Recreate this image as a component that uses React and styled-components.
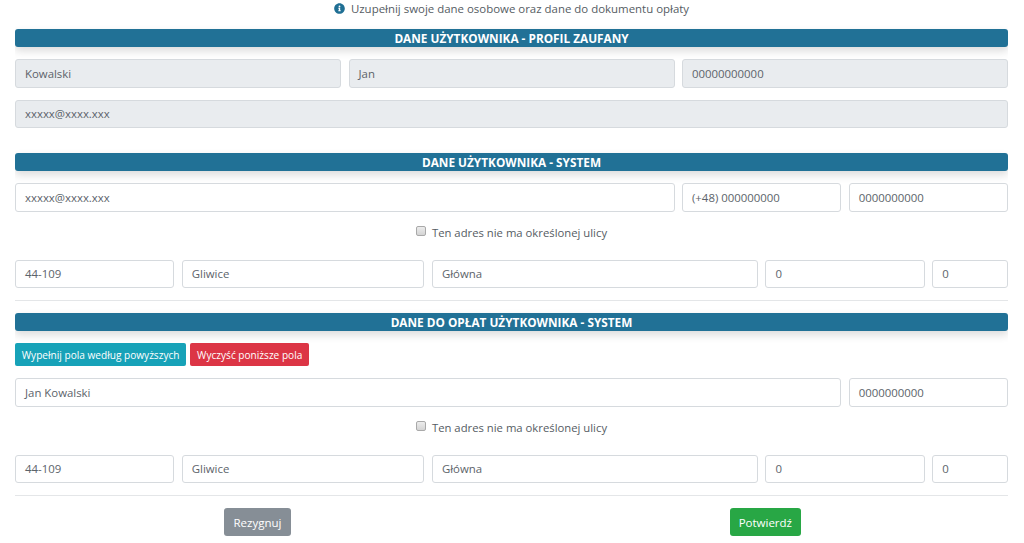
import React from "react";
import styled, { createGlobalStyle } from "styled-components";

const Global = createGlobalStyle`
  html, body { margin: 0; padding: 0; background: #fff; }
  body { font-family: "Open Sans", "Noto Sans", sans-serif; color: #495057; }
`;
const Page = styled.div`
  width: 993px; height: 543px; margin-left: 15px; overflow: hidden;
  display: flex; flex-direction: column;
`;
const Intro = styled.div`
  height: 17px; display: flex; justify-content: center; align-items: center; gap: 6px;
  font-size: 11.45px; color: #555c63; margin-bottom: 12px;
  svg { width: 11px; height: 11px; fill: #1f6f94; }
`;
const Header = styled.div`
  height: 18px; line-height: 19px; text-align: center; background: #217196; color: #fff;
  font-size: 11.8px; font-weight: 700; border-radius: 3px;
  box-shadow: 0 4px 8px rgba(0,0,0,.14); margin-bottom: 12px;
`;
const Row = styled.div`
  display: grid; grid-template-columns: repeat(12, 1fr); column-gap: 7.5px;
  margin-bottom: ${p => p.$mb ?? 12}px;
`;
const Field = styled.div`
  grid-column: span ${p => p.$span};
  box-sizing: border-box; height: 28.5px; padding: 0 9px;
  display: flex; align-items: center; font-size: 11.4px; color: #5c636a;
  background: ${p => p.$off ? "#e9ecef" : "#fff"};
  border: 1px solid #d6dade; border-radius: 3px;
`;
const Check = styled.div`
  box-sizing: border-box; height: 20px; padding-top: 1px;
  display: flex; justify-content: center; align-items: center; gap: 6px;
  font-size: 11.3px; color: #555c63; margin-bottom: 18px;
`;
const Box = styled.span`
  width: 10px; height: 10px; box-sizing: border-box; border: 1px solid #a9a9a9; border-radius: 2px;
  background: linear-gradient(#ececec, #d4d4d4); margin-top: -3px;
`;
const Rule = styled.div`height: 1px; background: #e4e6e8; margin-bottom: 12px;`;
const Tools = styled.div`display: flex; gap: 4px; margin-bottom: 12px;`;
const Small = styled.div`
  height: 23px; padding: 0 6.8px; display: flex; align-items: center; border-radius: 2px;
  font-size: 10.1px; color: #fff; background: ${p => p.$bg};
`;
const Actions = styled.div`display: grid; grid-template-columns: repeat(2, 1fr);`;
const Cell = styled.div`display: flex; justify-content: ${p => p.$j}; padding: ${p => p.$p};`;
const Action = styled.div`
  height: 28px; padding: 0 ${p => p.$px}px; display: flex; align-items: center; border-radius: 3px;
  font-size: 11.5px; color: #fff; background: ${p => p.$bg};
`;

const Info = () => (
  <svg viewBox="0 0 512 512"><path d="M256 8C119 8 8 119 8 256s111 248 248 248 248-111 248-248S393 8 256 8zm0 110a42 42 0 1 1 0 84 42 42 0 0 1 0-84zm56 254c0 7-5 12-12 12h-88c-7 0-12-5-12-12v-24c0-7 5-12 12-12h12v-64h-12c-7 0-12-5-12-12v-24c0-7 5-12 12-12h64c7 0 12 5 12 12v100h12c7 0 12 5 12 12z"/></svg>
);

const Address = () => (
  <Row>
    <Field $span={2}>44-109</Field>
    <Field $span={3}>Gliwice</Field>
    <Field $span={4}>Główna</Field>
    <Field $span={2}>0</Field>
    <Field $span={1}>0</Field>
  </Row>
);

export default function App() {
  return (
    <Page>
      <Global />
      <Intro><Info />Uzupełnij swoje dane osobowe oraz dane do dokumentu opłaty</Intro>
      <Header>DANE UŻYTKOWNIKA - PROFIL ZAUFANY</Header>
      <Row>
        <Field $off $span={4}>Kowalski</Field>
        <Field $off $span={4}>Jan</Field>
        <Field $off $span={4}>00000000000</Field>
      </Row>
      <Row $mb={25}><Field $off $span={12}>xxxxx@xxxx.xxx</Field></Row>
      <Header>DANE UŻYTKOWNIKA - SYSTEM</Header>
      <Row $mb={10}>
        <Field $span={8}>xxxxx@xxxx.xxx</Field>
        <Field $span={2}>(+48) 000000000</Field>
        <Field $span={2}>0000000000</Field>
      </Row>
      <Check><Box />Ten adres nie ma określonej ulicy</Check>
      <Address />
      <Rule />
      <Header>DANE DO OPŁAT UŻYTKOWNIKA - SYSTEM</Header>
      <Tools>
        <Small $bg="#17a2b8">Wypełnij pola według powyższych</Small>
        <Small $bg="#dc3545">Wyczyść poniższe pola</Small>
      </Tools>
      <Row $mb={10}>
        <Field $span={10}>Jan Kowalski</Field>
        <Field $span={2}>0000000000</Field>
      </Row>
      <Check><Box />Ten adres nie ma określonej ulicy</Check>
      <Address />
      <Rule />
      <Actions>
        <Cell $j="flex-start" $p="0 0 0 209px"><Action $px={9.5} $bg="#868e96">Rezygnuj</Action></Cell>
        <Cell $j="flex-end" $p="0 207px 0 0"><Action $px={9} $bg="#28a745">Potwierdź</Action></Cell>
      </Actions>
    </Page>
  );
}
